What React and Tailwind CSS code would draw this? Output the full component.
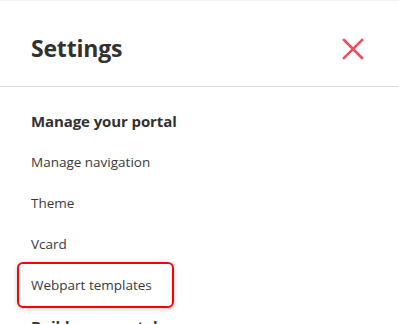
import React from 'react';

const items = [
  { label: 'Manage navigation' },
  { label: 'Theme' },
  { label: 'Vcard' },
  { label: 'Webpart templates', highlighted: true },
];

// Close glyph drawn as two crossing strokes
const CloseIcon = () => (
  <svg width="22" height="22" viewBox="0 0 22 22" fill="none">
    <path d="M2 2L20 20M20 2L2 20" stroke="#e94f5c" strokeWidth="2.6" strokeLinecap="square" />
  </svg>
);

export default function App() {
  return (
    <div
      className="w-[399px] h-[324px] overflow-hidden bg-white border-t border-[#f4f4f4] text-[#323130]"
      style={{ fontFamily: '"Open Sans", "Noto Sans", Arial, sans-serif' }}
    >
      {/* Header */}
      <div className="flex items-center justify-between h-[86px] pt-[10px] pl-[31px] pr-[35px] border-b border-[#d5dde3]">
        <h1 className="text-[23px] font-bold leading-none tracking-[-0.2px]">Settings</h1>
        <button className="flex items-center justify-center">
          <CloseIcon />
        </button>
      </div>

      {/* Menu */}
      <div className="pt-[14px] px-[17px]">
        <h2 className="h-[41px] flex items-center px-[14px] text-[15px] font-bold tracking-[-0.1px]">
          Manage your portal
        </h2>
        {items.map((item) => (
          <div
            key={item.label}
            className={
              item.highlighted
                ? '-mt-[3px] h-[46px] w-[157px] flex items-center px-[12px] text-[13.5px] text-[#3a3a3a] border-2 border-[#f00] rounded-[6px] shadow-[0_1px_5px_rgba(0,0,0,0.2)]'
                : 'h-[41px] flex items-center px-[14px] text-[13.5px] text-[#3a3a3a]'
            }
          >
            {item.label}
          </div>
        ))}
        <h2 className="h-[41px] -mt-[2px] flex items-center px-[14px] text-[15px] font-bold">
          Build your portal
        </h2>
      </div>
    </div>
  );
}
